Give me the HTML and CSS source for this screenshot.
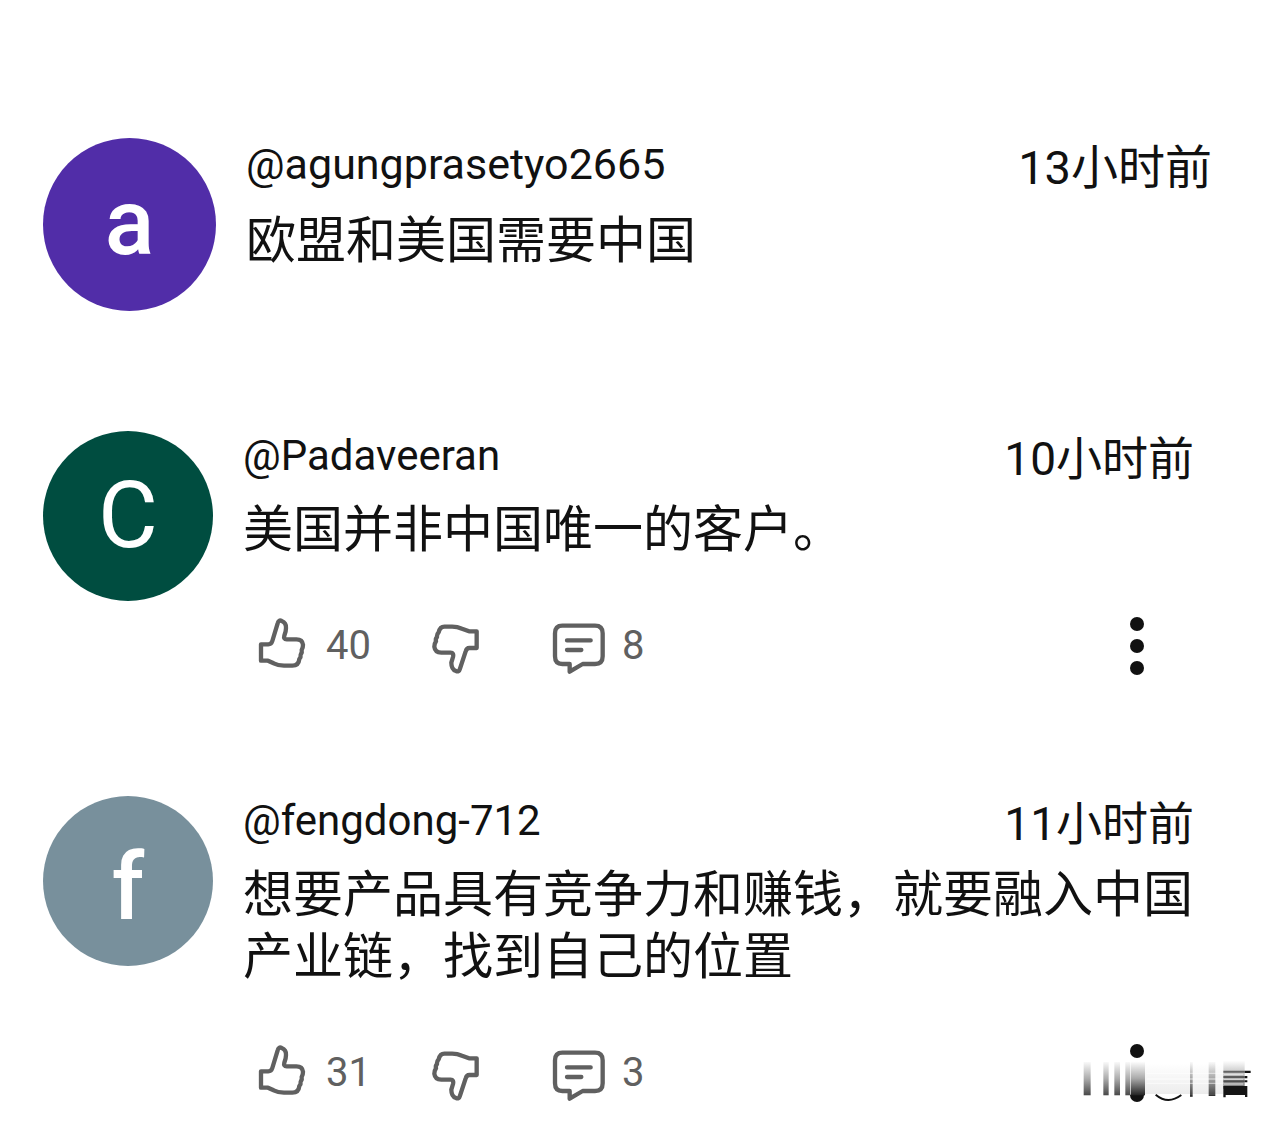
FILE: index.html
```html
<!DOCTYPE html>
<html lang="zh-CN">
<head>
<meta charset="utf-8">
<meta name="viewport" content="width=device-width, initial-scale=1">
<title>评论</title>
<link rel="stylesheet" href="styles.css">
</head>
<body>
<svg class="sprite" aria-hidden="true">
  <symbol id="thumb-up" viewBox="54 48 150 156">
    <path d="M66 130H88Q97 130 100 120L116 67Q119 55 128 60Q142 65 141 81Q141 92 136 104Q133 115 143 115H170Q190 114 192 131Q192 140 188 147Q190 154 185 161Q186 169 181 174Q179 194 160 194H135Q116 193 104 187L87 179H66Z"/>
  </symbol>
  <symbol id="thumb-down" viewBox="570 62 156 156">
    <path d="M710 90H687L666 82Q650 75 632 76H615Q600 75 596 93Q590 99 591 107Q586 113 588 120Q583 127 583 136Q585 153 604 154H632Q642 154 639 167L634 184Q634 204 648 209Q657 213 660 202L677 150Q680 140 688 140H710Z"/>
  </symbol>
  <symbol id="comment" viewBox="158 64 162 156">
    <path d="M189 75H287Q310 75 310 98V167Q310 190 287 190H250L211 213V190H189Q167 190 167 167V98Q167 75 189 75ZM203 119H274M203 148H246"/>
  </symbol>
  <symbol id="more" viewBox="0 0 14 58">
    <circle cx="7" cy="7" r="7"/><circle cx="7" cy="29" r="7"/><circle cx="7" cy="51" r="7"/>
  </symbol>
</svg>
<main class="comments">
  <article class="comment comment--large">
    <div class="avatar avatar--purple">a</div>
    <div class="content">
      <header class="meta"><a class="author" href="#">@agungprasetyo2665</a><time class="time">13小时前</time></header>
      <p class="text">欧盟和美国需要中国</p>
    </div>
  </article>
  <article class="comment">
    <div class="avatar avatar--green">C</div>
    <div class="content">
      <header class="meta"><a class="author" href="#">@Padaveeran</a><time class="time">10小时前</time></header>
      <p class="text">美国并非中国唯一的客户。</p>
      <div class="actions">
        <button class="action" aria-label="赞 40"><svg class="icon thumb"><use href="#thumb-up"/></svg><span>40</span></button>
        <button class="action" aria-label="踩"><svg class="icon thumb thumb--down"><use href="#thumb-down"/></svg></button>
        <button class="action action--reply" aria-label="回复 8"><svg class="icon bubble"><use href="#comment"/></svg><span>8</span></button>
        <button class="action action--more" aria-label="更多"><svg class="dots"><use href="#more"/></svg></button>
      </div>
    </div>
  </article>
  <article class="comment">
    <div class="avatar avatar--slate">f</div>
    <div class="content">
      <header class="meta"><a class="author" href="#">@fengdong-712</a><time class="time">11小时前</time></header>
      <p class="text">想要产品具有竞争力和赚钱，就要融入中国产业链，找到自己的位置</p>
      <div class="actions">
        <button class="action" aria-label="赞 31"><svg class="icon thumb"><use href="#thumb-up"/></svg><span>31</span></button>
        <button class="action" aria-label="踩"><svg class="icon thumb thumb--down"><use href="#thumb-down"/></svg></button>
        <button class="action action--reply" aria-label="回复 3"><svg class="icon bubble"><use href="#comment"/></svg><span>3</span></button>
        <button class="action action--more" aria-label="更多"><svg class="dots"><use href="#more"/></svg></button>
      </div>
    </div>
  </article>
  <svg class="watermark" viewBox="66 90 510 126" aria-hidden="true">
    <defs>
      <linearGradient id="fade" x1="0" y1="0" x2="0" y2="1"><stop offset="0" stop-color="#111" stop-opacity="0"/><stop offset=".5" stop-color="#111" stop-opacity=".35"/><stop offset=".94" stop-color="#111" stop-opacity=".75"/><stop offset="1" stop-color="#111"/></linearGradient>
      <linearGradient id="veil" x1="0" y1="0" x2="0" y2="1"><stop offset="0" stop-color="#fff"/><stop offset=".5" stop-color="#aaa"/><stop offset="1" stop-color="#222"/></linearGradient>
      <linearGradient id="haze" x1="0" y1="0" x2="0" y2="1"><stop offset="0" stop-color="#888" stop-opacity="0"/><stop offset="1" stop-color="#888" stop-opacity=".16"/></linearGradient>
    </defs>
    <path fill="#fff" d="M208 92H258V194H208Z"/>
    <path fill="url(#veil)" d="M212 94H255V196H212Z"/>
    <path fill="url(#haze)" d="M255 100H490V192H255Z"/>
    <path fill="url(#fade)" d="M71 96H92V196H71ZM130 96H146V196H130ZM163 96H180V196H163ZM196 96H210V196H196ZM390 96H398V200H390ZM446 96H466V198H446ZM490 92H554V176H490Z"/>
    <path fill="#fff" d="M276 193H374V198H276Z"/>
    <path fill="none" stroke="#111" stroke-width="6" d="M287 194Q324 225 364 195"/>
    <path fill="none" stroke="#fff" stroke-opacity=".5" stroke-width="4" d="M260 130H490M260 147H490M260 160H490M492 133H550M492 148H550M492 162H550"/>
    <path fill="#151515" d="M490 168H562V201H555V195H497V202H490ZM554 122H572V129H554ZM554 138H562V145H554ZM554 151H562V157H554Z"/>
    <path fill="#111" fill-opacity=".55" d="M490 122H554V128H490ZM490 138H554V144H490ZM490 151H554V157H490Z"/>
  </svg>
</main>
</body>
</html>
```
FILE: styles.css
```css
* { box-sizing: border-box; }
body {
  margin: 0;
  background: #fff;
  color: #111;
  font-family: Roboto, "Noto Sans CJK SC", sans-serif;
}
.sprite { position: absolute; width: 0; height: 0; }
.comments {
  position: relative;
  display: flex;
  flex-direction: column;
  gap: 120px;
  padding: 138px 0 24px 43px;
}
.comment {
  display: flex;
  align-items: flex-start;
  gap: 30px;
  padding-right: 86px;
}
.comment--large { padding-right: 68px; }
.avatar {
  flex: none;
  width: 170px;
  height: 170px;
  border-radius: 50%;
  color: #fff;
  font-size: 92px;
  font-weight: 500;
  line-height: 170px;
  text-align: center;
}
.comment--large .avatar { width: 173px; height: 173px; }
.avatar--purple { background: #512da8; }
.avatar--green { background: #004d40; font-weight: 400; }
.avatar--slate { background: #78909c; line-height: 184px; }
.content { flex: 1; min-width: 0; }
.meta {
  display: flex;
  justify-content: space-between;
  height: 50px;
}
.author {
  color: inherit;
  font-size: 42px;
  line-height: 50px;
  text-decoration: none;
}
.time { font-size: 46px; line-height: 56px; }
.text {
  margin: 18px 0 0;
  font-size: 50px;
  line-height: 62px;
}
.comment--large .meta { height: 54px; }
.comment--large .author { font-size: 43px; line-height: 52px; }
.comment--large .time { font-size: 47px; line-height: 60px; }
.actions {
  display: grid;
  grid-template-columns: 173px 122px auto 1fr;
  align-items: center;
  height: 60px;
  margin: 55px 0 0 14px;
}
.action {
  display: flex;
  align-items: center;
  gap: 19px;
  padding: 0;
  border: 0;
  background: none;
  color: #606060;
  font: inherit;
  font-size: 40px;
  line-height: 60px;
}
.action--reply { gap: 16px; }
.icon {
  fill: none;
  stroke: #606060;
  stroke-width: 13px;
  stroke-linecap: round;
  stroke-linejoin: round;
}
.thumb { width: 50px; height: 52px; margin-bottom: 6px; }
.thumb--down { width: 52px; margin: 4px 0 0; }
.bubble { width: 54px; height: 52px; margin-top: 4px; }
.action--more { justify-self: end; margin-right: 50px; }
.dots { width: 14px; height: 58px; fill: #111; }
.watermark {
  position: absolute;
  right: 28px;
  bottom: 25px;
  width: 170px;
  height: 42px;
}
```
